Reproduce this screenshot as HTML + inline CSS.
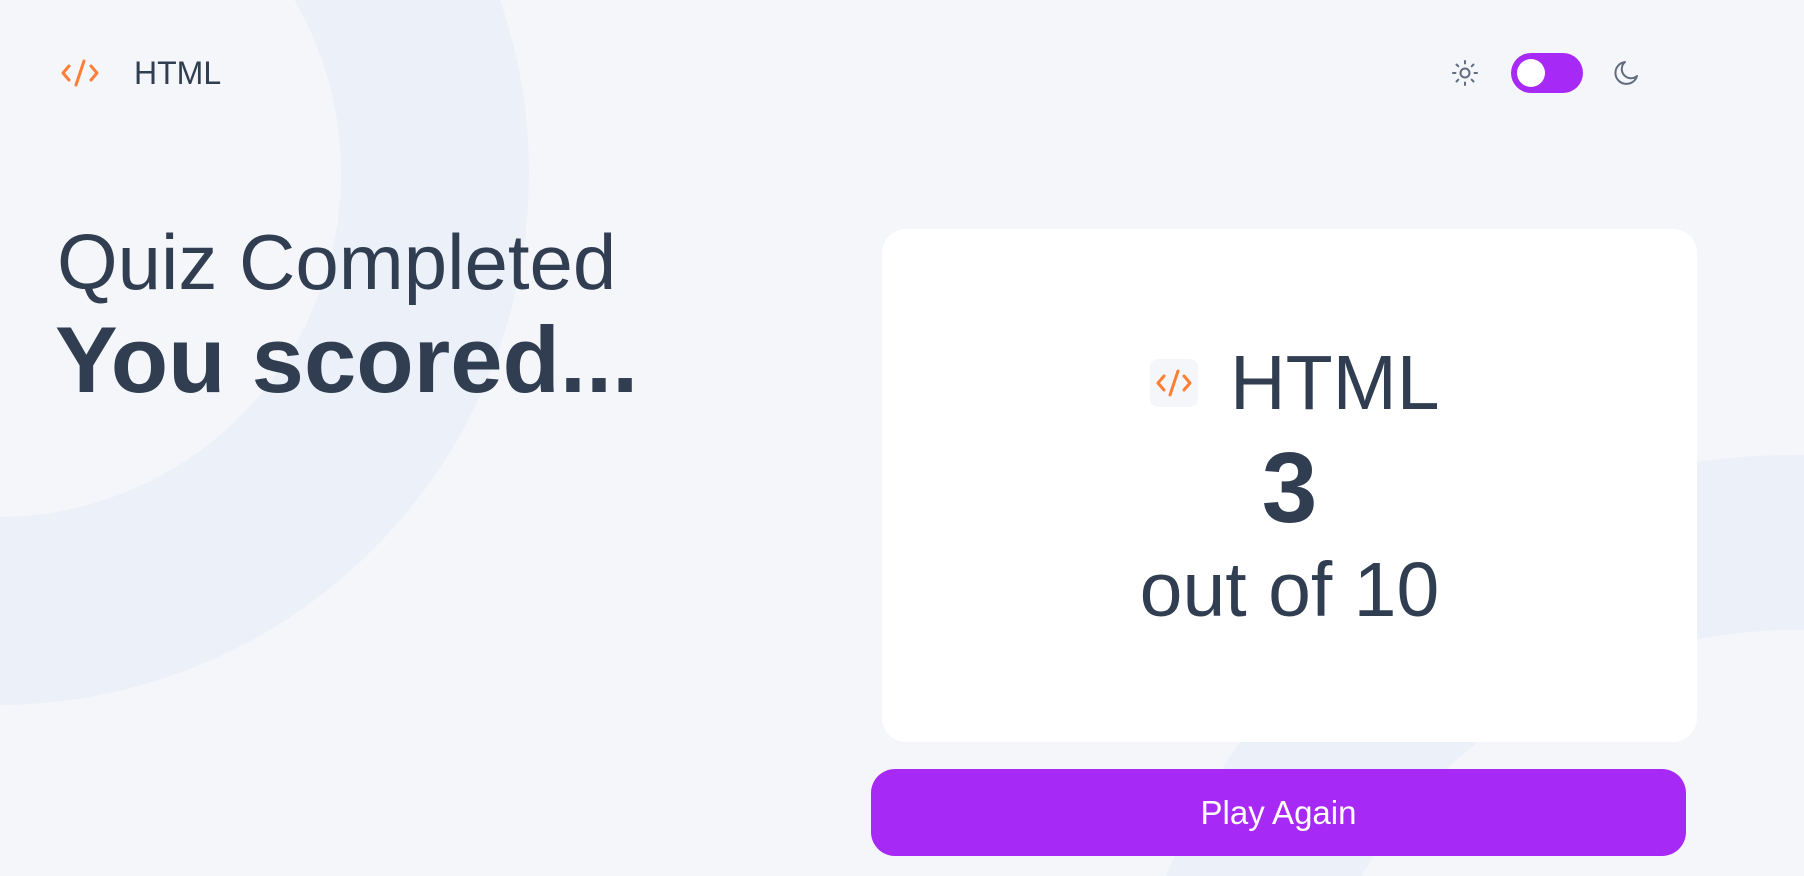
<!DOCTYPE html>
<html><head><meta charset="utf-8"><style>
html,body{margin:0;padding:0;width:1804px;height:876px;overflow:hidden}
body{background:#f4f6fa;font-family:"Liberation Sans",sans-serif;color:#313e51}
#w{position:relative;width:1804px;height:876px;overflow:hidden}
.ring{position:absolute;border-radius:50%;box-sizing:border-box;border-style:solid;border-color:#ecf1f9}
.a{position:absolute;white-space:nowrap}
</style></head><body><div id="w">
<div class="ring" style="left:-535px;top:-359px;width:1064px;height:1064px;border-width:188px"></div>
<div class="ring" style="left:1115px;top:455px;width:1360px;height:1360px;border-width:175px"></div>

<svg class="a" style="left:60px;top:58px" width="40" height="30" viewBox="0 0 40 30" fill="none" stroke="#ff7e35" stroke-width="3" stroke-linecap="round" stroke-linejoin="round"><path d="M9 8 L3 15 L9 22"/><path d="M31 8 L37 15 L31 22"/><path d="M24 3 L16 27"/></svg>
<div class="a" style="left:134px;top:53px;font-size:32px;line-height:40px">HTML</div>

<svg class="a" style="left:1450px;top:58px" width="30" height="30" viewBox="0 0 30 30" fill="none" stroke="#626c7f" stroke-width="2" stroke-linecap="round"><circle cx="15" cy="15" r="4.5"/><path d="M15 3v2.5M15 24.5V27M3 15h2.5M24.5 15H27M6.5 6.5l1.8 1.8M21.7 21.7l1.8 1.8M6.5 23.5l1.8-1.8M21.7 8.3l1.8-1.8"/></svg>
<div class="a" style="left:1511px;top:53px;width:72px;height:40px;border-radius:20px;background:#a729f5"></div>
<div class="a" style="left:1517px;top:59px;width:28px;height:28px;border-radius:50%;background:#fff"></div>
<svg class="a" style="left:1612px;top:58px" width="30" height="30" viewBox="0 0 30 30" fill="none" stroke="#626c7f" stroke-width="2" stroke-linejoin="round"><path d="M13 4 A11 11 0 1 0 25 18 A9 9 0 0 1 13 4 Z"/></svg>

<div class="a" style="left:57px;top:220px;font-size:78px;line-height:84px">Quiz Completed</div>
<div class="a" style="left:55px;top:309px;font-size:94px;line-height:102px;font-weight:bold">You scored...</div>

<div class="a" style="left:882px;top:229px;width:815px;height:513px;background:#fff;border-radius:24px"></div>
<div class="a" style="left:1150px;top:359px;width:48px;height:48px;background:#f4f6fa;border-radius:8px"></div>
<svg class="a" style="left:1154px;top:367px" width="40" height="32" viewBox="0 0 40 32" fill="none" stroke="#ff7e35" stroke-width="3" stroke-linecap="round" stroke-linejoin="round"><path d="M10 9 L4 16 L10 23"/><path d="M30 9 L36 16 L30 23"/><path d="M24 4 L16 28"/></svg>
<div class="a" style="left:1230px;top:340px;font-size:77px;line-height:86px">HTML</div>
<div class="a" style="left:882px;width:815px;text-align:center;top:438px;font-size:100px;line-height:100px;font-weight:bold">3</div>
<div class="a" style="left:882px;width:815px;text-align:center;top:550px;font-size:77px;line-height:80px">out of 10</div>

<div class="a" style="left:871px;top:769px;width:815px;height:87px;background:#a729f5;border-radius:24px;color:#fff;font-size:33px;line-height:87px;text-align:center">Play Again</div>
</div></body></html>
